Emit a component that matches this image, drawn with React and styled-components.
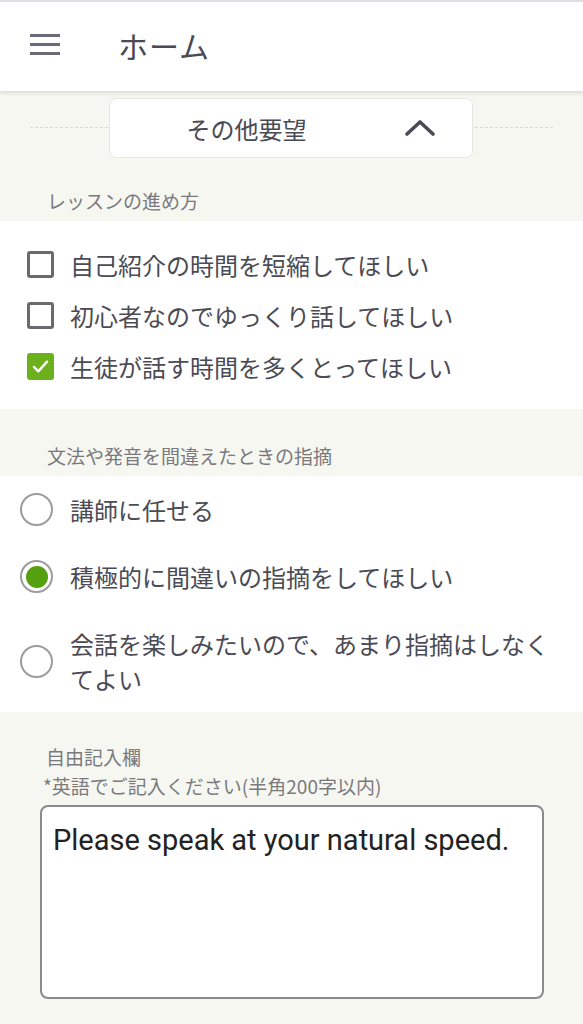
import React from 'react';
import styled, { createGlobalStyle } from 'styled-components';

const GlobalStyle = createGlobalStyle`
  html, body {
    margin: 0;
    padding: 0;
    background: #f6f7f1;
  }
  * { box-sizing: border-box; }
  body {
    font-family: "Noto Sans CJK JP", "Noto Sans", sans-serif;
    color: #4b4b55;
  }
`;

const lessonOptions = [
  { label: '自己紹介の時間を短縮してほしい', checked: false },
  { label: '初心者なのでゆっくり話してほしい', checked: false },
  { label: '生徒が話す時間を多くとってほしい', checked: true },
];

const feedbackOptions = [
  { label: '講師に任せる', selected: false },
  { label: '積極的に間違いの指摘をしてほしい', selected: true },
  { label: '会話を楽しみたいので、あまり指摘はしなくてよい', selected: false },
];

const App = () => {
  return (
    <React.Fragment>
      <GlobalStyle />
      <Page>
        <Header>
          <MenuButton aria-label="menu">
            <MenuLine />
            <MenuLine />
            <MenuLine />
          </MenuButton>
          <HeaderTitle>ホーム</HeaderTitle>
        </Header>

        <AccordionRow>
          <AccordionButton>
            <AccordionLabel>その他要望</AccordionLabel>
            <Chevron viewBox="0 0 32 18">
              <path d="M3 15 L16 3 L29 15" fill="none" stroke="#4a4a58" strokeWidth="3.6" strokeLinecap="round" strokeLinejoin="round" />
            </Chevron>
          </AccordionButton>
        </AccordionRow>

        <SectionLabel top={30}>レッスンの進め方</SectionLabel>
        <CheckList>
          {lessonOptions.map((o) => (
            <CheckRow key={o.label}>
              <CheckBox checked={o.checked}>
                {o.checked && (
                  <svg viewBox="0 0 24 24" width="21" height="21">
                    <path d="M4.5 12.5 L9.5 17.5 L19.5 6.5" fill="none" stroke="#fff" strokeWidth="2.8" strokeLinecap="round" strokeLinejoin="round" />
                  </svg>
                )}
              </CheckBox>
              <OptionText>{o.label}</OptionText>
            </CheckRow>
          ))}
        </CheckList>

        <SectionLabel top={34}>文法や発音を間違えたときの指摘</SectionLabel>
        <RadioList>
          {feedbackOptions.map((o) => (
            <RadioRow key={o.label}>
              <Radio selected={o.selected} />
              <OptionText>{o.label}</OptionText>
            </RadioRow>
          ))}
        </RadioList>

        <FreeSection>
          <FreeLabel>自由記入欄</FreeLabel>
          <FreeNote>*英語でご記入ください(半角200字以内)</FreeNote>
          <TextBox defaultValue="Please speak at your natural speed." />
        </FreeSection>
      </Page>
    </React.Fragment>
  );
};

const Page = styled.div`
  width: 583px;
  min-height: 1024px;
  background: #f6f7f1;
  overflow: hidden;
`;

const Header = styled.header`
  position: relative;
  z-index: 2;
  height: 91px;
  background: #fff;
  border-top: 2px solid #dde1e6;
  display: flex;
  align-items: center;
  padding: 0 0 4px 30px;
  box-shadow: 0 2px 4px rgba(0, 0, 0, 0.12);
`;

const MenuButton = styled.div`
  width: 30px;
  display: flex;
  flex-direction: column;
  gap: 6px;
`;

const MenuLine = styled.span`
  display: block;
  height: 3px;
  background: #6b6b78;
`;

const HeaderTitle = styled.h1`
  margin: 0 0 0 58px;
  font-size: 30px;
  font-weight: 400;
  color: #4a4a55;
  letter-spacing: 1px;
`;

const AccordionRow = styled.div`
  position: relative;
  display: flex;
  justify-content: center;
  padding: 7px 30px 0;
  &::before {
    content: '';
    position: absolute;
    left: 30px;
    right: 30px;
    top: 36px;
    border-top: 1px dashed #d9dad5;
  }
`;

const AccordionButton = styled.div`
  position: relative;
  width: 364px;
  height: 60px;
  margin-right: 2px;
  background: #fff;
  border: 1px solid #e6e7e2;
  border-radius: 7px;
  display: flex;
  align-items: center;
  padding-left: 77px;
`;

const AccordionLabel = styled.span`
  font-size: 24px;
  color: #4a4a55;
`;

const Chevron = styled.svg`
  position: absolute;
  right: 36px;
  top: 20px;
  width: 32px;
  height: 18px;
`;

const SectionLabel = styled.div`
  padding: ${(p) => p.top}px 0 0 47px;
  height: ${(p) => p.top + 33}px;
  font-size: 19px;
  color: #7a7a7e;
  line-height: 26px;
`;

const CheckList = styled.div`
  background: #fff;
  padding: 18px 0 17px 27px;
`;

const CheckRow = styled.div`
  height: 51px;
  display: flex;
  align-items: center;
`;

const CheckBox = styled.span`
  width: 27px;
  height: 27px;
  border-radius: 3px;
  border: ${(p) => (p.checked ? 'none' : '3px solid #6a6a6e')};
  background: ${(p) => (p.checked ? '#6cb01c' : '#fff')};
  display: flex;
  align-items: center;
  justify-content: center;
  flex-shrink: 0;
  margin-right: 16px;
`;

const OptionText = styled.span`
  font-size: 24px;
  line-height: 35px;
  color: #4b4b55;
`;

const RadioList = styled.div`
  background: #fff;
  padding: 0 28px 0 20px;
`;

const RadioRow = styled.div`
  display: flex;
  align-items: center;
  padding: 16px 0;
`;

const Radio = styled.span`
  width: 33px;
  height: 33px;
  border-radius: 50%;
  border: 2.5px solid #9c9c9c;
  flex-shrink: 0;
  margin-right: 17px;
  display: flex;
  align-items: center;
  justify-content: center;
  &::after {
    content: '';
    width: 22px;
    height: 22px;
    border-radius: 50%;
    background: ${(p) => (p.selected ? '#55a00f' : 'transparent')};
  }
`;

const FreeSection = styled.div`
  padding: 30px 39px 0 40px;
`;

const FreeLabel = styled.div`
  font-size: 19px;
  color: #7a7a7e;
  line-height: 29px;
  padding-left: 6px;
`;

const FreeNote = styled.div`
  font-size: 19px;
  color: #7a7a7e;
  line-height: 29px;
  padding-left: 3px;
  margin-bottom: 5px;
`;

const TextBox = styled.textarea`
  display: block;
  width: 504px;
  height: 194px;
  resize: none;
  border: 2px solid #8a8a8e;
  border-radius: 8px;
  background: #fff;
  padding: 14px 11px;
  font-family: Roboto, "Noto Sans", sans-serif;
  font-size: 29px;
  line-height: 38px;
  color: #222;
  outline: none;
`;

export default App;
